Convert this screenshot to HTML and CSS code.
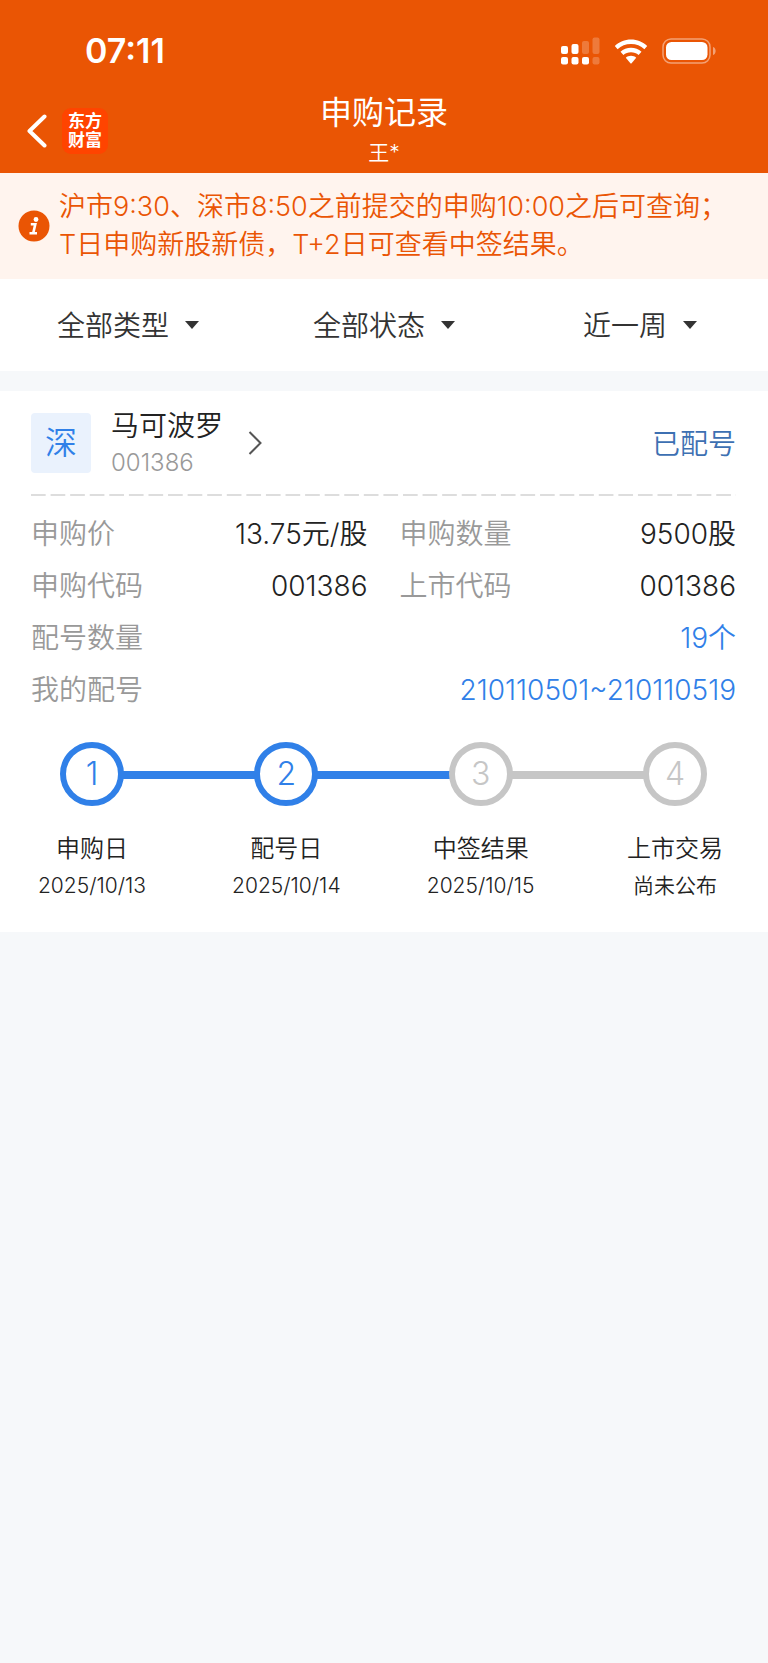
FILE: index.html
```html
<!DOCTYPE html>
<html lang="zh-CN">
<head>
    <meta charset="UTF-8">
    <meta name="viewport" content="width=device-width, initial-scale=1.0">
    <title>申购记录</title>
    <link rel="stylesheet" href="styles.css">
</head>
<body>
<header class="header">
    <div class="status-bar">
        <span class="time">07:11</span>
        <div class="status-icons">
            <svg class="signal" width="39" height="28" viewBox="0 0 39 28" fill="#fff" aria-hidden="true">
                <rect x="0" y="9" width="7" height="8" rx="2"/>
                <rect x="10.5" y="7" width="7" height="10" rx="2"/>
                <rect x="21" y="4" width="7" height="13" rx="2" opacity=".22"/>
                <rect x="31.5" y="0.5" width="7" height="16.5" rx="2" opacity=".22"/>
                <rect x="0" y="20" width="7" height="7.5" rx="2"/>
                <rect x="10.5" y="20" width="7" height="7.5" rx="2"/>
                <rect x="21" y="20" width="7" height="7.5" rx="2"/>
                <rect x="31.5" y="20" width="7" height="7.5" rx="2" opacity=".22"/>
            </svg>
            <svg class="wifi" width="34" height="25" viewBox="0 0 34 25" fill="#fff" aria-hidden="true">
                <path d="M17 0.5C23.3 0.5 29 3 33.2 7L30.4 10.2C26.9 6.9 22.2 5 17 5S7.1 6.9 3.6 10.2L0.8 7C5 3 10.7 0.5 17 0.5Z"/>
                <path d="M17 8.7C21 8.7 24.7 10.2 27.5 12.8L24.6 16C22.6 14.2 19.9 13.2 17 13.2S11.4 14.2 9.4 16L6.5 12.8C9.3 10.2 13 8.7 17 8.7Z"/>
                <path d="M17 16.8C19 16.8 20.8 17.5 22.2 18.7L17.6 24.2Q17 24.8 16.4 24.2L11.8 18.7C13.2 17.5 15 16.8 17 16.8Z"/>
            </svg>
            <svg class="battery" width="54" height="26" viewBox="0 0 54 26" aria-hidden="true">
                <rect x="1" y="1" width="47" height="24" rx="8" fill="none" stroke="#fff" stroke-width="1.5" opacity=".45"/>
                <rect x="4" y="4" width="41.5" height="18" rx="5.5" fill="#fff"/>
                <path d="M51 9C54.5 10 54.5 16 51 17Z" fill="#fff" opacity=".45"/>
            </svg>
        </div>
    </div>
    <div class="nav">
        <div class="nav-left">
            <button class="back" type="button" aria-label="返回">
                <svg width="20" height="34" viewBox="0 0 20 34" fill="none" stroke="#fff" stroke-width="4" stroke-linecap="round" stroke-linejoin="round">
                    <path d="M17.5 2.5L2.5 17L17.5 31.5"/>
                </svg>
            </button>
            <span class="logo">东方<br>财富</span>
        </div>
        <div class="nav-title">
            <h1>申购记录</h1>
            <p>王*</p>
        </div>
    </div>
</header>

<div class="notice">
    <svg width="32" height="32" viewBox="0 0 32 32" aria-hidden="true">
        <circle cx="16" cy="16" r="15.5" fill="#ea5504"/>
        <circle cx="18" cy="9.5" r="2.4" fill="#fff"/>
        <path d="M12.8 14.3H17.3L15.2 23.3M11.5 23.3H19" fill="none" stroke="#fff" stroke-width="2.6"/>
    </svg>
    <p>沪市9:30、深市8:50之前提交的申购10:00之后可查询；<br>T日申购新股新债，T+2日可查看中签结果。</p>
</div>

<div class="filters">
    <div class="filter">
        <select aria-label="类型">
            <option>全部类型</option>
            <option>新股申购</option>
            <option>新债申购</option>
        </select>
    </div>
    <div class="filter">
        <select aria-label="状态">
            <option>全部状态</option>
        </select>
    </div>
    <div class="filter">
        <select aria-label="时间">
            <option>近一周</option>
            <option>近一月</option>
            <option>近三月</option>
        </select>
    </div>
</div>

<main class="card">
    <div class="card-head">
        <span class="market">深</span>
        <a class="stock" href="#">
            <span class="stock-text">
                <span class="stock-name">马可波罗</span>
                <span class="stock-code">001386</span>
            </span>
            <svg width="14" height="24" viewBox="0 0 14 24" fill="none" stroke="#555" stroke-width="2" aria-hidden="true">
                <path d="M1.5 1L12.5 12L1.5 23"/>
            </svg>
        </a>
        <span class="state">已配号</span>
    </div>

    <dl class="details">
        <div class="row"><dt>申购价</dt><dd>13.75元/股</dd></div>
        <div class="row"><dt>申购数量</dt><dd>9500股</dd></div>
        <div class="row"><dt>申购代码</dt><dd>001386</dd></div>
        <div class="row"><dt>上市代码</dt><dd>001386</dd></div>
        <div class="row wide"><dt>配号数量</dt><dd>19个</dd></div>
        <div class="row wide"><dt>我的配号</dt><dd>210110501~210110519</dd></div>
    </dl>

    <div class="steps">
        <div class="step done">
            <span class="step-num">1</span>
            <span class="step-name">申购日</span>
            <span class="step-date">2025/10/13</span>
        </div>
        <div class="step-line done"></div>
        <div class="step done">
            <span class="step-num">2</span>
            <span class="step-name">配号日</span>
            <span class="step-date">2025/10/14</span>
        </div>
        <div class="step-line done"></div>
        <div class="step">
            <span class="step-num">3</span>
            <span class="step-name">中签结果</span>
            <span class="step-date">2025/10/15</span>
        </div>
        <div class="step-line"></div>
        <div class="step">
            <span class="step-num">4</span>
            <span class="step-name">上市交易</span>
            <span class="step-date">尚未公布</span>
        </div>
    </div>
</main>
</body>
</html>
```

FILE: styles.css
```css
* {
    box-sizing: border-box;
}
body {
    font-family: Inter, "Noto Sans CJK SC", sans-serif;
    font-size: 28px;
    font-weight: 350;
    background-color: #f6f8fa;
    color: #222;
    margin: 0;
}
h1, p, dl, dd {
    margin: 0;
}

/* header */
.header {
    background: #ea5504;
    color: #fff;
}
.status-bar {
    display: flex;
    justify-content: space-between;
    align-items: center;
    padding: 31px 52px 22px 85px;
}
.time {
    font-size: 34px;
    font-weight: 600;
    line-height: 40px;
}
.status-icons {
    display: flex;
    align-items: center;
    gap: 14px;
}
.nav {
    display: grid;
    grid-template-columns: 1fr auto 1fr;
}
.nav-left {
    display: flex;
    align-items: center;
    gap: 15px;
    padding: 0 0 5px 27px;
}
.back {
    display: flex;
    padding: 0;
    border: none;
    background: none;
    cursor: pointer;
}
.logo {
    width: 46px;
    padding: 4px 0;
    border-radius: 9px;
    background: #ff4400;
    font-size: 17px;
    font-weight: 700;
    line-height: 19px;
    text-align: center;
}
.nav-title {
    text-align: center;
    line-height: 40px;
}
.nav-title h1 {
    font-size: 32px;
    font-weight: 400;
}
.nav-title p {
    font-size: 21px;
}

/* notice */
.notice {
    display: flex;
    align-items: center;
    gap: 9px;
    padding: 15px 18px;
    background: #fff4ee;
    color: #ea5504;
    font-size: 27px;
    line-height: 38px;
}
.notice svg {
    flex: none;
}

/* filters */
.filters {
    display: grid;
    grid-template-columns: repeat(3, 1fr);
    justify-items: center;
    margin-bottom: 20px;
    padding: 24px 0;
    background: #fff;
}
.filter {
    position: relative;
}
.filter select {
    appearance: none;
    height: 44px;
    padding: 2px 29px 0 0;
    border: none;
    background: none;
    color: #333;
    font: inherit;
    cursor: pointer;
}
.filter::after {
    content: "";
    position: absolute;
    top: 18px;
    right: 0;
    border: 7px solid transparent;
    border-top: 8px solid #333;
    border-bottom: none;
    pointer-events: none;
}

/* card */
.card {
    padding: 15px 32px 28px 31px;
    background: #fff;
}
.card-head {
    display: flex;
    align-items: center;
    padding-bottom: 16px;
    background: linear-gradient(90deg, #ddd 76%, transparent 76%) 0 100% / calc(100% / 36) 2px repeat-x;
}
.market {
    width: 60px;
    margin-right: 20px;
    border-radius: 4px;
    background: #eaf2fd;
    color: #3080e8;
    font-size: 32px;
    line-height: 60px;
    text-align: center;
}
.stock {
    display: flex;
    align-items: center;
    gap: 25px;
    color: #222;
    text-decoration: none;
}
.stock-text {
    display: flex;
    flex-direction: column;
}
.stock-name {
    line-height: 40px;
}
.stock-code {
    color: #999;
    font-size: 24px;
    line-height: 34px;
}
.state {
    margin-left: auto;
    padding-bottom: 2px;
    color: #3d70b2;
}
.details {
    display: grid;
    grid-template-columns: 1fr 1fr;
    column-gap: 32px;
    padding: 12px 0 26px;
    line-height: 52px;
}
.row {
    display: flex;
    justify-content: space-between;
}
.row dt {
    color: #999;
}
.wide {
    grid-column: 1 / -1;
}
.wide dd {
    color: #3080e8;
}

/* steps */
.steps {
    display: flex;
    padding: 0 6px;
}
.step {
    display: flex;
    flex-direction: column;
    align-items: center;
    width: 110px;
}
.step-num {
    width: 64px;
    margin-bottom: 24px;
    border: 6px solid #c6c6c6;
    border-radius: 50%;
    color: #c6c6c6;
    font-size: 32px;
    font-weight: 300;
    line-height: 52px;
    text-align: center;
}
.step.done .step-num {
    border-color: #3080e8;
    color: #3080e8;
}
.step-line {
    flex: 1;
    height: 8px;
    margin: 29px -24px 0;
    background: #c6c6c6;
}
.step-line.done {
    background: #3080e8;
}
.step-name {
    font-size: 24px;
    line-height: 38px;
    white-space: nowrap;
}
.step-date {
    font-size: 21px;
    line-height: 36px;
    white-space: nowrap;
}
```
